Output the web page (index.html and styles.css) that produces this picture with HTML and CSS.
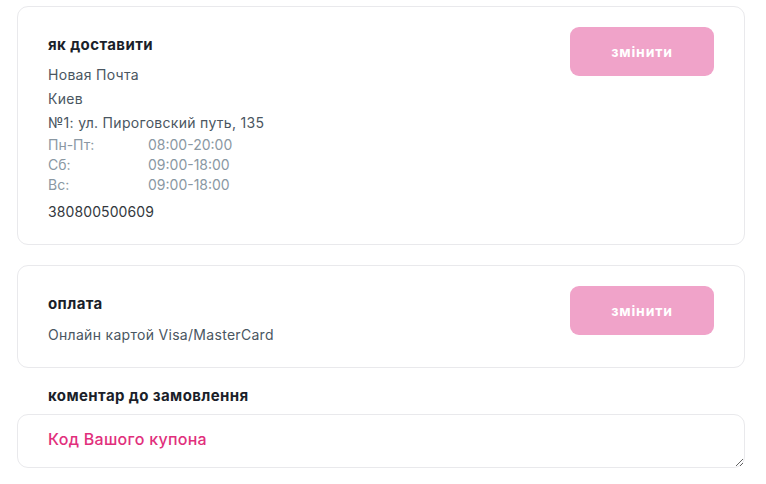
FILE: index.html
```html
<!DOCTYPE html>
<html lang="uk">
<head>
<meta charset="utf-8">
<link rel="stylesheet" href="styles.css">
</head>
<body>
<div class="page">
  <section class="card">
    <div class="info">
      <h3 class="title">як доставити</h3>
      <p class="line">Новая Почта</p>
      <p class="line">Киев</p>
      <p class="line">№1: ул. Пироговский путь, 135</p>
      <div class="hours">
        <span>Пн-Пт:</span><span>08:00-20:00</span>
        <span>Сб:</span><span>09:00-18:00</span>
        <span>Вс:</span><span>09:00-18:00</span>
      </div>
      <p class="line phone">380800500609</p>
    </div>
    <button class="btn">змінити</button>
  </section>

  <section class="card pay">
    <div class="info">
      <h3 class="title">оплата</h3>
      <p class="line">Онлайн картой Visa/MasterCard</p>
    </div>
    <button class="btn">змінити</button>
  </section>

  <h3 class="title comment-label">коментар до замовлення</h3>
  <textarea class="comment" placeholder="Код Вашого купона"></textarea>
</div>
</body>
</html>
```

FILE: styles.css
```css
* { box-sizing: border-box; }
body {
  margin: 0;
  background: #ffffff;
  font-family: Inter, "Open Sans", "DejaVu Sans", sans-serif;
}
.page {
  padding: 6px 21px 0 17px;
  display: flex;
  flex-direction: column;
}
.card {
  border: 1px solid #e9e9ec;
  border-radius: 11px;
  padding: 20px 30px 20px 30px;
  display: flex;
  justify-content: space-between;
  align-items: flex-start;
}
.pay { margin-top: 20px; }
.info {
  margin-top: 8px;
  display: flex;
  flex-direction: column;
}
.title {
  margin: 0;
  font-size: 15px;
  font-weight: 650;
  line-height: 20px;
  letter-spacing: 0.4px;
  color: #1b1f2a;
}
.title + .line { margin-top: 8px; }
.pay .title + .line { margin-top: 9px; }
.line {
  margin: 0;
  font-size: 14px;
  line-height: 24px;
  letter-spacing: 0.3px;
  color: #4a5661;
}
.hours {
  display: grid;
  grid-template-columns: 100px auto;
  font-size: 14px;
  line-height: 20px;
  color: #8a98a3;
}
.phone { margin-top: 5px; color: #33383d; letter-spacing: 0.1px; }
.btn {
  width: 144px;
  height: 49px;
  border: none;
  border-radius: 9px;
  background: #f0a3c9;
  color: #ffffff;
  font-family: inherit;
  font-size: 14px;
  font-weight: 700;
  letter-spacing: 0.8px;
}
.comment-label {
  margin: 18px 0 0 31px;
}
.comment {
  margin-top: 8px;
  height: 54px;
  width: 728px;
  border: 1px solid #e9e9ec;
  border-radius: 11px;
  padding: 14px 30px;
  font-family: inherit;
  font-size: 16px;
  font-weight: 500;
  letter-spacing: 0.3px;
  color: #e12f7c;
  outline: none;
}
.comment::placeholder {
  color: #e12f7c;
  opacity: 1;
}
```
